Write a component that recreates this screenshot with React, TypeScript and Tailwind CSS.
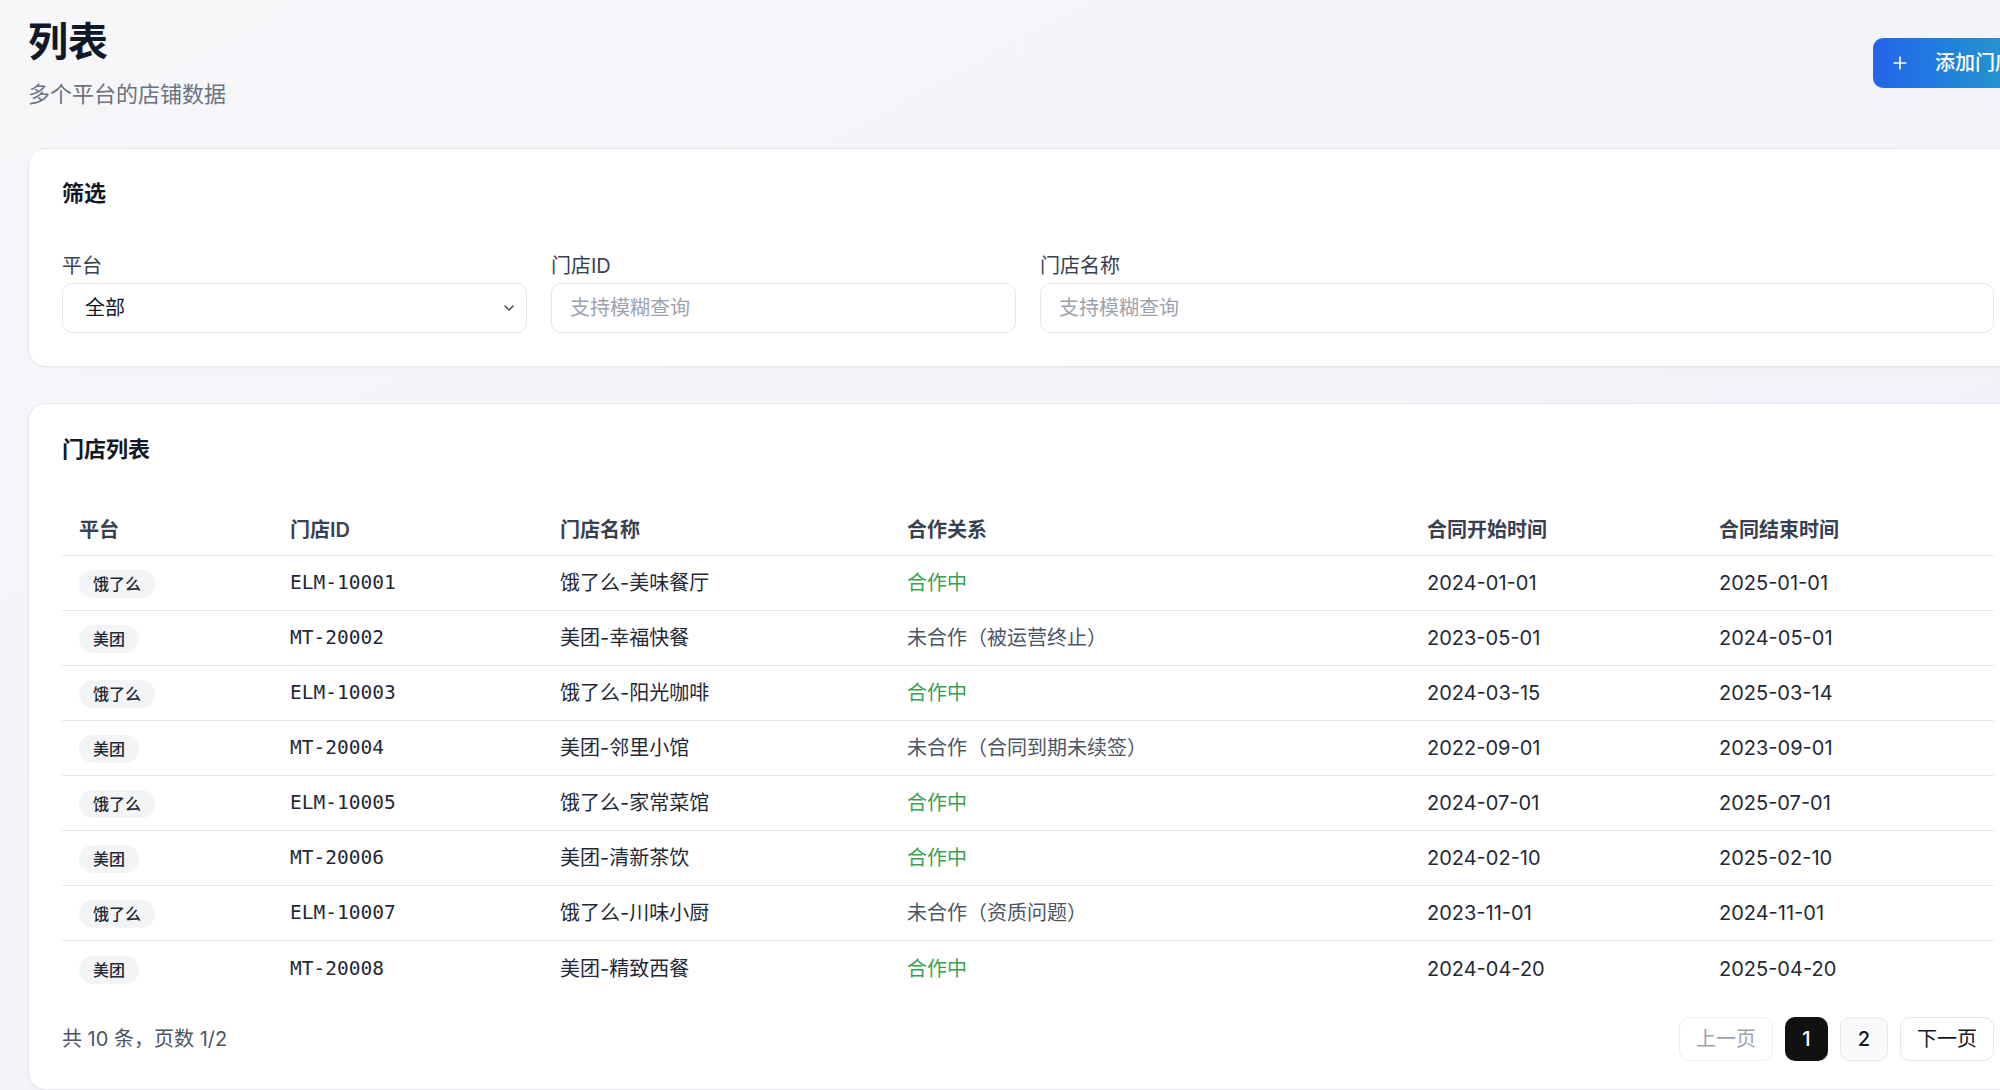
import { ChevronDown, Plus } from "lucide-react";

type Store = {
  platform: string;
  id: string;
  name: string;
  status: string;
  active: boolean;
  start: string;
  end: string;
};

const stores: Store[] = [
  { platform: "饿了么", id: "ELM-10001", name: "饿了么-美味餐厅", status: "合作中", active: true, start: "2024-01-01", end: "2025-01-01" },
  { platform: "美团", id: "MT-20002", name: "美团-幸福快餐", status: "未合作（被运营终止）", active: false, start: "2023-05-01", end: "2024-05-01" },
  { platform: "饿了么", id: "ELM-10003", name: "饿了么-阳光咖啡", status: "合作中", active: true, start: "2024-03-15", end: "2025-03-14" },
  { platform: "美团", id: "MT-20004", name: "美团-邻里小馆", status: "未合作（合同到期未续签）", active: false, start: "2022-09-01", end: "2023-09-01" },
  { platform: "饿了么", id: "ELM-10005", name: "饿了么-家常菜馆", status: "合作中", active: true, start: "2024-07-01", end: "2025-07-01" },
  { platform: "美团", id: "MT-20006", name: "美团-清新茶饮", status: "合作中", active: true, start: "2024-02-10", end: "2025-02-10" },
  { platform: "饿了么", id: "ELM-10007", name: "饿了么-川味小厨", status: "未合作（资质问题）", active: false, start: "2023-11-01", end: "2024-11-01" },
  { platform: "美团", id: "MT-20008", name: "美团-精致西餐", status: "合作中", active: true, start: "2024-04-20", end: "2025-04-20" },
];

const cols = "grid grid-cols-[211px_270px_347px_520px_292px_292px] items-center";

export default function App() {
  return (
    <div className="w-screen h-screen overflow-hidden bg-gradient-to-br from-[#f7f7fa] via-[#f3f4f8] to-[#edf1f8] font-[Inter,'Noto_Sans_CJK_SC',sans-serif] text-[#1f2937]">
      <div className="w-[2056px] px-[28px] pt-[18px]">
        {/* header */}
        <div className="flex justify-between items-start">
          <div>
            <h1 className="text-[40px] leading-[48px] font-bold text-[#111827]">列表</h1>
            <p className="mt-[12px] text-[22px] leading-[33px] text-[#6b7280]">多个平台的店铺数据</p>
          </div>
          <button className="mt-[20px] w-[155px] h-[50px] flex items-center gap-[25px] pl-[17px] rounded-[10px] bg-gradient-to-r from-[#2563eb] to-[#2a9bc8] text-white text-[20px] font-medium whitespace-nowrap">
            <Plus size={20} strokeWidth={2} />
            添加门店
          </button>
        </div>

        {/* filters */}
        <section className="mt-[37px] bg-white border border-[#e6e8ec] rounded-[18px] shadow-[0_1px_3px_rgba(15,23,42,0.04)] px-[33px] pt-[30px] pb-[33px]">
          <h2 className="text-[22px] leading-[28px] font-semibold text-[#111827]">筛选</h2>
          <div className="mt-[47px] grid grid-cols-4 gap-x-[24px]">
            <div>
              <label className="block text-[20px] leading-[24px] text-[#374151] mb-[5px]">平台</label>
              <div className="relative">
                <select className="w-full h-[50px] appearance-none rounded-[10px] border border-[#e5e7eb] bg-white pl-[22px] text-[20px] text-[#111827] outline-none">
                  <option>全部</option>
                  <option>饿了么</option>
                  <option>美团</option>
                </select>
                <ChevronDown size={16} strokeWidth={2} className="absolute right-[10px] top-[17px] text-[#374151] pointer-events-none" />
              </div>
            </div>
            <div>
              <label className="block text-[20px] leading-[24px] text-[#374151] mb-[5px]">门店ID</label>
              <input placeholder="支持模糊查询" className="w-full h-[50px] rounded-[10px] border border-[#e5e7eb] bg-white pl-[18px] text-[20px] placeholder:text-[#9ca3af] outline-none" />
            </div>
            <div className="col-span-2">
              <label className="block text-[20px] leading-[24px] text-[#374151] mb-[5px]">门店名称</label>
              <input placeholder="支持模糊查询" className="w-full h-[50px] rounded-[10px] border border-[#e5e7eb] bg-white pl-[18px] text-[20px] placeholder:text-[#9ca3af] outline-none" />
            </div>
          </div>
        </section>

        {/* list */}
        <section className="mt-[36px] bg-white border border-[#e6e8ec] rounded-[18px] shadow-[0_1px_3px_rgba(15,23,42,0.04)] px-[33px] pt-[31px] pb-[28px]">
          <h2 className="text-[22px] leading-[28px] font-semibold text-[#111827]">门店列表</h2>

          <div className="mt-[41px]">
            <div className={`${cols} h-[52px] border-b border-[#e5e7eb] text-[20px] font-semibold text-[#374151]`}>
              <div className="px-[17px]">平台</div>
              <div className="px-[17px]">门店ID</div>
              <div className="px-[17px]">门店名称</div>
              <div className="px-[17px]">合作关系</div>
              <div className="px-[17px]">合同开始时间</div>
              <div className="px-[17px]">合同结束时间</div>
            </div>
            {stores.map((s, i) => (
              <div
                key={s.id}
                className={`${cols} h-[55px] text-[20px] ${i < stores.length - 1 ? "border-b border-[#e5e7eb]" : ""}`}
              >
                <div className="px-[17px]">
                  <span className="inline-flex items-center h-[28px] px-[14px] rounded-full bg-[#f3f4f6] text-[16px] font-medium text-[#1f2937]">
                    {s.platform}
                  </span>
                </div>
                <div className="px-[17px] font-['DejaVu_Sans_Mono',monospace] text-[19.5px] text-[#1f2937]">{s.id}</div>
                <div className="px-[17px] text-[#1f2937]">{s.name}</div>
                <div className={`px-[17px] ${s.active ? "text-[#3a9f4f]" : "text-[#4b5563]"}`}>{s.status}</div>
                <div className="px-[17px] text-[#1f2937]">{s.start}</div>
                <div className="px-[17px] text-[#1f2937]">{s.end}</div>
              </div>
            ))}
          </div>

          <div className="mt-[21px] flex items-center justify-between">
            <span className="text-[20px] text-[#4b5563]">共 10 条，页数 1/2</span>
            <div className="flex items-center gap-[12px] text-[20px]">
              <button className="h-[44px] w-[94px] rounded-[10px] border border-[#eceef1] bg-white text-[#9ca3af]">上一页</button>
              <button className="h-[44px] w-[43px] rounded-[10px] bg-[#111111] text-white font-medium">1</button>
              <button className="h-[44px] w-[48px] rounded-[10px] border border-[#e5e7eb] bg-[#f9fafb] text-[#111827] font-medium">2</button>
              <button className="h-[44px] w-[94px] rounded-[10px] border border-[#e5e7eb] bg-white text-[#111827]">下一页</button>
            </div>
          </div>
        </section>
      </div>
    </div>
  );
}
